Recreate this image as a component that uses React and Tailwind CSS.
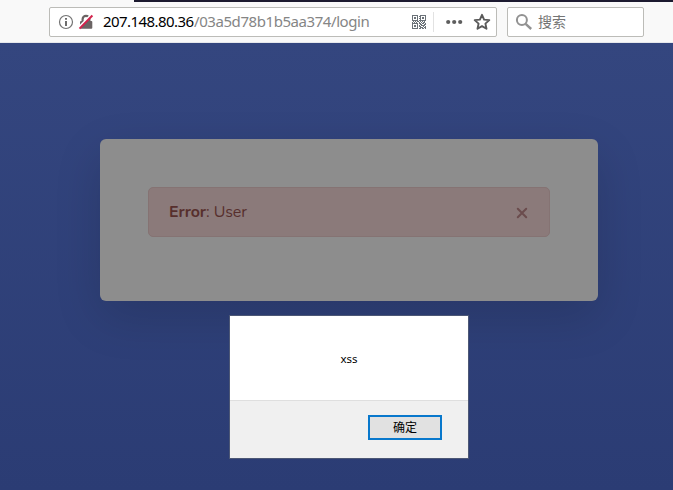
import React from "react";

const QR = [
  "11111100111111",
  "10000101100001",
  "10110100101101",
  "10110101101101",
  "10000100100001",
  "11111101111111",
  "01010110101010",
  "10101001010110",
  "11111101101101",
  "10000100110011",
  "10110101011110",
  "10110101100101",
  "10000100111011",
  "11111101101101",
];

function InfoIcon() {
  return (
    <svg className="h-4 w-4 shrink-0" viewBox="0 0 16 16" fill="none">
      <circle cx="8" cy="8" r="6.5" stroke="#737373" strokeWidth="1.2" />
      <path d="M7.1 4h1.8v1.7H7.1zM7.1 6.9h1.8V12H7.1z" fill="#5c5c5c" />
    </svg>
  );
}

function InsecureIcon() {
  return (
    <svg className="h-4 w-4 shrink-0" viewBox="0 0 16 16" fill="none">
      <path d="M4.6 8V5.2a3.4 3.4 0 0 1 6.8 0V8" stroke="#6b6464" strokeWidth="2.2" />
      <rect x="2" y="7" width="12.3" height="7.8" rx="1" fill="#6b6464" />
      <path d="M0.9 13.2 13.2 0.8" stroke="#fff" strokeWidth="2" />
      <path d="M1.5 14.6 14.4 1.5" stroke="#d3234c" strokeWidth="2" />
    </svg>
  );
}

function QrIcon() {
  return (
    <svg className="h-[14px] w-[14px] shrink-0" viewBox="0 0 14 14" fill="#6b7278" shapeRendering="crispEdges">
      {QR.flatMap((row, y) =>
        [...row].map((c, x) => (c === "1" ? <rect key={x + "-" + y} x={x} y={y} width="1" height="1" /> : null))
      )}
    </svg>
  );
}

export default function App() {
  return (
    <div className="flex h-[490px] w-[673px] flex-col overflow-hidden bg-[#30417a]">
      <header className="flex h-[43px] shrink-0 flex-col border-b border-[#e6e8ec] bg-[#f9f9f9] font-['Noto_Sans','Noto_Sans_CJK_SC',sans-serif]">
        <div className="ml-[134px] h-[2px] shrink-0 bg-[#1c1a30]" />
        <div className="mt-[5px] ml-[49px] flex gap-[10px]">
          <div className="flex h-[30px] w-[448px] items-center rounded-[2px] border border-[#bcbcb8] bg-white pl-2">
            <InfoIcon />
            <div className="ml-1 flex">
              <InsecureIcon />
            </div>
            <div className="ml-[9px] flex w-[309px] -translate-y-px text-[15px] leading-5 whitespace-nowrap text-[#858585]">
              <span className="w-[91px] tracking-[-0.56px] text-black">207.148.80.36</span>
              <span className="tracking-[-0.43px]">/03a5d78b1b5aa374/login</span>
            </div>
            <QrIcon />
            <div className="ml-[7px] h-5 w-px bg-[#e2e2e2]" />
            <svg className="ml-[12px] h-4 w-[17px] shrink-0" viewBox="0 0 17 16" fill="#5e5e5e">
              <circle cx="2.2" cy="8" r="2.1" />
              <circle cx="8.2" cy="8" r="2.1" />
              <circle cx="14.2" cy="8" r="2.1" />
            </svg>
            <svg className="ml-[10px] h-[18px] w-[18px] shrink-0" viewBox="0 0 18 18" fill="none">
              <path
                d="m9 1.8 2.1 4.8 5.2.5-3.9 3.5 1.1 5.2L9 13.1l-4.5 2.7 1.1-5.2-3.9-3.5 5.2-.5z"
                stroke="#5a5a5a"
                strokeWidth="1.9"
                strokeLinejoin="round"
              />
            </svg>
          </div>
          <div className="flex h-[30px] w-[137px] items-center rounded-[2px] border border-[#bcbcb8] bg-white pl-[7px]">
            <svg className="h-[18px] w-[18px] shrink-0" viewBox="0 0 18 18" fill="none" stroke="#929292" strokeWidth="2">
              <circle cx="6.9" cy="7" r="5" />
              <path d="m10.6 10.8 5.6 5.2" strokeWidth="2.4" />
            </svg>
            <span className="ml-[5px] text-[14px] leading-5 text-[#757575]">搜索</span>
          </div>
        </div>
      </header>
      <main className="flex grow flex-col bg-linear-to-b from-[#34467f] to-[#2b3c74] pt-[96px]">
        <section className="ml-[100px] h-[162px] w-[498px] shrink-0 rounded-md bg-[#8d8d8d] px-12 pt-12 shadow-[0_16px_48px_rgba(0,0,0,0.14)]">
          <div className="flex h-[50px] items-center justify-between rounded-[5px] border border-[#857373] bg-[#8b7a7a] pr-[21px] pl-5 font-['Nunito','Lato',sans-serif] text-[16px] text-[#5b2a2a]">
            <p className="leading-6 tracking-[-0.08px] text-[#572f2d]">
              <strong className="font-bold">Error</strong>: User
            </p>
            <svg className="mt-[2px] h-3 w-3" viewBox="0 0 12 12" fill="none" stroke="#6b4c4d" strokeWidth="2" strokeLinecap="round">
              <path d="m1.8 1.8 8.4 8.4M10.2 1.8l-8.4 8.4" />
            </svg>
          </div>
        </section>
        <section className="relative mt-[14px] ml-[229px] flex h-[144px] w-[240px] shrink-0 flex-col border border-[#4c5775] bg-[#f0f0f0] font-['Noto_Sans','Noto_Sans_CJK_SC',sans-serif] text-[12px] text-black">
          <div className="flex h-[85px] shrink-0 items-center justify-center border-b border-[#dfdfdf] bg-white pt-[2px] text-[11.5px]">
            xss
          </div>
          <div className="flex justify-end pt-[14px] pr-[26px]">
            <button className="flex h-[25px] w-[74px] items-center justify-center border-2 border-[#0878cc] bg-[#e1e1e1] leading-4">
              确定
            </button>
          </div>
        </section>
      </main>
    </div>
  );
}
